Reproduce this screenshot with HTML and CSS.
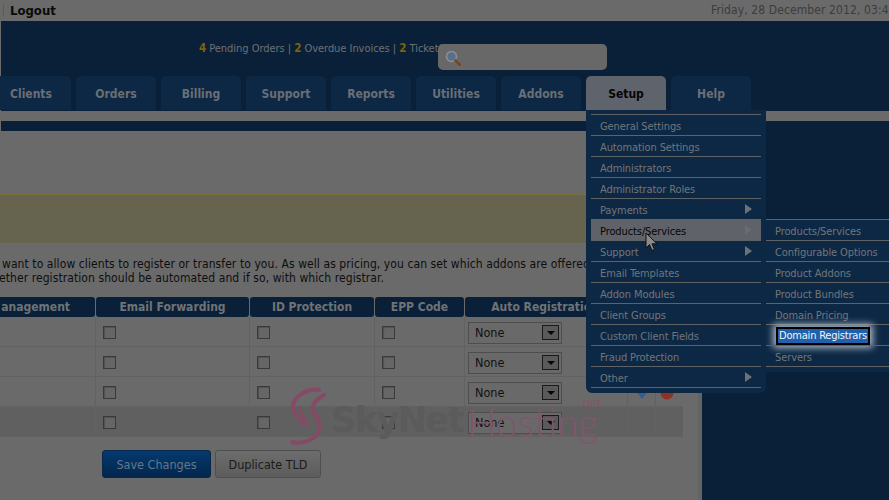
FILE: index.html
```html
<!DOCTYPE html>
<html lang="en">
<head>
<meta charset="utf-8">
<title>Domain Registrars</title>
<link rel="stylesheet" href="styles.css">
</head>
<body>
<div class="topbar">
  <div class="logout"><span class="pipe"></span><b>Logout</b></div>
  <div class="date">Friday, 28 December 2012, 03:45</div>
</div>
<header class="header">
  <div class="stats"><b>4</b> Pending Orders | <b>2</b> Overdue Invoices | <b>2</b> Ticket(s) Awaiting Reply</div>
  <nav class="tabs">
    <a class="tab">Clients</a><a class="tab">Orders</a><a class="tab">Billing</a><a class="tab">Support</a><a class="tab">Reports</a><a class="tab">Utilities</a><a class="tab">Addons</a><a class="tab active">Setup</a><a class="tab">Help</a>
  </nav>
</header>
<div class="strip"></div>
<div class="main">
  <div class="content">
    <div class="bluebar"></div>
    <div class="notice"></div>
    <p class="intro first">want to allow clients to register or transfer to you. As well as pricing, you can set which addons are offered with each TLD.</p>
    <p class="intro second">ether registration should be automated and if so, with which registrar.</p>
    <div class="grid">
      <div class="th">anagement</div><div class="th">Email Forwarding</div><div class="th">ID Protection</div><div class="th">EPP Code</div><div class="th">Auto Registration</div>
    </div>
    <div class="row">
      <span class="cell"></span><span class="cell"><i class="check"></i></span><span class="cell"><i class="check"></i></span><span class="cell"><i class="check"></i></span><span class="cell"><span class="select">None<i class="drop"></i></span></span><span class="cell"></span><span class="cell"></span>
    </div>
    <div class="row">
      <span class="cell"></span><span class="cell"><i class="check"></i></span><span class="cell"><i class="check"></i></span><span class="cell"><i class="check"></i></span><span class="cell"><span class="select">None<i class="drop"></i></span></span><span class="cell"></span><span class="cell"></span>
    </div>
    <div class="row">
      <span class="cell"></span><span class="cell"><i class="check"></i></span><span class="cell"><i class="check"></i></span><span class="cell"><i class="check"></i></span><span class="cell"><span class="select">None<i class="drop"></i></span></span><span class="cell"><svg class="rowicon" width="14" height="14" viewBox="0 0 14 14"><path d="M1 5 7 13 13 5 7 0Z" fill="#2f5f94"/></svg></span><span class="cell"><svg class="rowicon shift" width="14" height="14" viewBox="0 0 14 14"><circle cx="7" cy="7" r="6.5" fill="#8e3226"/></svg></span>
    </div>
    <div class="row shaded">
      <span class="cell"></span><span class="cell"><i class="check"></i></span><span class="cell"><i class="check"></i></span><span class="cell"><i class="check"></i></span><span class="cell"><span class="select">None<i class="drop"></i></span></span><span class="cell"></span><span class="cell"></span>
    </div>
    <div class="actions">
      <button class="btn primary">Save Changes</button>
      <button class="btn">Duplicate TLD</button>
    </div>
    <div class="watermark">
      <svg class="wm-logo" width="38" height="60" viewBox="0 0 38 60"><g fill="none" stroke="#864a66" stroke-linecap="round"><path d="M30 3C20 1 6 8 4 18 2 26 12 30 15 38" stroke-width="4"/><path d="M35 8C28 12 22 18 24 24 26 30 33 34 30 44 27 52 14 58 3 55" stroke-width="4"/><path d="M12 20C10 25 16 31 20 38" stroke-width="2"/></g></svg>
      <span class="wm-sky">SkyNet</span><span class="wm-host">Hosting</span><span class="wm-net">.net</span>
    </div>
  </div>
  <aside class="side"></aside>
</div>
<div class="search"><svg width="16" height="16" viewBox="0 0 16 16"><circle cx="6.5" cy="6.5" r="5" fill="#56708a" stroke="#8a8f96" stroke-width="1.6"/><path d="M10.5 10.5 15 15" stroke="#6e4a22" stroke-width="2.6" stroke-linecap="round"/></svg></div>
<ul class="menu">
  <li>General Settings</li>
  <li>Automation Settings</li>
  <li>Administrators</li>
  <li>Administrator Roles</li>
  <li class="more">Payments</li>
  <li class="more hover">Products/Services</li>
  <li class="more">Support</li>
  <li>Email Templates</li>
  <li>Addon Modules</li>
  <li>Client Groups</li>
  <li>Custom Client Fields</li>
  <li>Fraud Protection</li>
  <li class="more">Other</li>
</ul>
<ul class="submenu">
  <li>Products/Services</li>
  <li>Configurable Options</li>
  <li>Product Addons</li>
  <li>Product Bundles</li>
  <li>Domain Pricing</li>
  <li><span class="target">Domain Registrars</span></li>
  <li>Servers</li>
</ul>
<svg class="cursor" width="13" height="20" viewBox="0 0 13 20"><path d="M1 1V16L4.5 12.6 7 18.5 9.5 17.4 7 11.8H12Z" fill="#8a8a8a" stroke="#111" stroke-width="1"/></svg>
</body>
</html>
```
FILE: styles.css
```css
* { box-sizing: border-box; }
html, body { margin: 0; padding: 0; }
body {
  width: 889px;
  height: 500px;
  overflow: hidden;
  position: relative;
  background: #6a6a6a;
  font-family: "DejaVu Sans Condensed", "DejaVu Sans", sans-serif;
  font-stretch: condensed;
  font-size: 11px;
  color: #111;
}
.topbar { height: 21px; display: flex; justify-content: space-between; white-space: nowrap; overflow: hidden; }
.logout { padding-left: 3px; display: flex; align-items: center; font-size: 13px; color: #0a0a0a; height: 20px; }
.pipe { width: 1px; height: 12px; background: #5a5a5a; margin-right: 6px; }
.date { flex: none; width: 178px; font-size: 12px; line-height: 20px; color: #3c3c3c; overflow: hidden; letter-spacing: .1px; }
.header { height: 90px; background: #0a2038; margin-left: 1px; display: flex; flex-direction: column; justify-content: flex-end; }
.stats { padding-left: 198px; margin-bottom: 17px; height: 20px; line-height: 18px; font-size: 11px; color: #6d7174; white-space: nowrap; letter-spacing: -.04px; }
.stats b { color: #7f6208; font-size: 11.5px; }
.tabs { display: flex; gap: 5px; margin-left: -10px; height: 34px; margin-bottom: 1px; }
.tab { flex: none; width: 80px; height: 34px; background: #0d2844; border-radius: 5px 5px 0 0; color: #6a6f75; font-weight: bold; font-size: 12px; text-align: center; line-height: 37px; }
.tab.active { background: #5f636b; color: #050505; }
.strip { height: 10px; }
.main { display: flex; height: 379px; }
.content { width: 698px; position: relative; overflow: hidden; }
.side { width: 191px; background: #0a2038; border-left: 4px solid #646464; }
.bluebar { height: 10px; background: #0a2038; margin-left: 1px; width: 700px; }
.notice { height: 50px; margin-top: 63px; border-top: 1px solid #7a6e3c; border-bottom: 1px solid #7a6e3c; background: #66634f; }
.intro { margin: 0; white-space: nowrap; font-size: 12px; line-height: 14px; color: #0e0e0e; letter-spacing: .08px; }
.first { margin-top: 13px; padding-left: 2px; }
.second { margin-left: -1px; }
.grid { display: grid; grid-template-columns: 95px 153px 124px 89px 160px; gap: 1px; margin-top: 12px; }
.th { height: 20px; background: #0a2038; border-radius: 3px; color: #6f7376; font-weight: bold; font-size: 12px; line-height: 21px; text-align: center; white-space: nowrap; overflow: hidden; }
.th:first-child { border-radius: 0 3px 3px 0; text-align: right; padding-right: 25px; }
.row { display: grid; grid-template-columns: 96px 154px 125px 90px 163px 28px 27px; width: 683px; height: 30px; border-bottom: 1px solid #626262; }
.row.shaded { background: #606060; }
.row:last-of-type { border-bottom: 0; }
.cell { display: flex; align-items: center; border-right: 1px solid #626262; padding: 2px 0 0 7px; }
.cell:last-child { border: 0; }
.check { width: 13px; height: 13px; border: 1px solid #3a3a3a; background: #666; box-shadow: inset 1px 1px 1px #525252; display: block; }
.select { width: 94px; height: 22px; margin-left: -4px; padding: 0 2px 0 6px; border: 1px solid #4d4d4d; display: flex; align-items: center; justify-content: space-between; font-size: 12.5px; color: #111; background: #696969; }
.drop { width: 17px; height: 15px; border: 1px solid #1a1a1a; background: #5a5a5a; position: relative; display: block; }
.drop::after { content: ""; position: absolute; left: 4px; top: 5px; border: 4px solid transparent; border-top-color: #050505; border-bottom: 0; }
.rowicon { display: block; flex: none; }
.rowicon.shift { margin-left: -3px; }
.actions { display: flex; gap: 4px; margin: 13px 0 0 102px; }
.btn { height: 28px; width: 106px; font: 12.5px "DejaVu Sans Condensed", "DejaVu Sans", sans-serif; font-stretch: condensed; color: #1b1b1b; border: 1px solid #4f4f4f; border-radius: 3px; background: linear-gradient(#6d6d6d, #5c5c5c); padding: 0; }
.btn.primary { width: 109px; color: #65778a; border-color: #07284a; background: linear-gradient(#033a6f, #03264c); }
.watermark { position: absolute; left: 289px; top: 266px; width: 320px; height: 62px; }
.wm-logo { position: absolute; left: 0; top: 0; }
.wm-sky { position: absolute; left: 42px; top: 13px; font: bold 35px "DejaVu Sans", sans-serif; letter-spacing: -1.5px; color: #5b5b5b; }
.wm-host { position: absolute; left: 178px; top: 12px; font: 300 39px Lato, "Liberation Sans", sans-serif; color: #80566c; }
.wm-net { position: absolute; left: 290px; top: 8px; font: 13px "Liberation Sans", sans-serif; color: #80566c; }
.search { position: absolute; left: 438px; top: 44px; width: 169px; height: 26px; border-radius: 5px; background: #686868; padding: 6px 7px; }
.search svg { display: block; }
.menu, .submenu { position: absolute; margin: 0; list-style: none; color: #72767a; white-space: nowrap; letter-spacing: -.1px; }
.menu { left: 586px; top: 110px; width: 180px; height: 283px; background: #0d2844; border-radius: 0 0 6px 6px; padding: 4px 5px 0; }
.menu li, .submenu li { height: 21px; line-height: 23px; border-top: 1px solid #5e6265; padding-left: 9px; position: relative; }
.menu li:last-child { height: 22px; border-bottom: 1px solid #5e6265; }
.menu li.more::after { content: ""; position: absolute; right: 9px; top: 5px; border: 5px solid transparent; border-left: 7px solid #6d7176; border-right: 0; }
.menu li.hover { background: #5f6268; color: #060606; height: 22px; margin-bottom: -1px; border-color: #5f6268; }
.menu li.hover::after { border-left-color: #696c71; }
.submenu { left: 766px; top: 219px; width: 123px; height: 153px; background: #0d2844; padding: 0; }
.submenu li:last-child { height: 22px; border-bottom: 1px solid #5e6265; }
.target { position: absolute; left: 10px; top: 2px; height: 18px; line-height: 14px; padding: 0 1px; letter-spacing: -.2px; color: #f4f4f4; background: #2060ad; border: 2px solid #000; box-shadow: 0 0 7px 3px #a8b6c8; }
.cursor { position: absolute; left: 645px; top: 232px; }
```
